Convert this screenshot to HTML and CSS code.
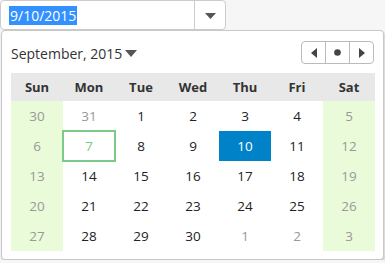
FILE: index.html
```html
<!DOCTYPE html>
<html lang="en">
<head>
  <meta charset="utf-8">
  <link rel="stylesheet" href="styles.css">
</head>
<body>

<div class="picker">
  <div class="input-box">
    <div class="input-text"><span class="sel">9/10/2015</span></div>
    <div class="drop-btn">
      <svg width="11" height="6" viewBox="0 0 11 6"><path d="M0 0 L11 0 L5.5 6 Z" fill="#555"/></svg>
    </div>
  </div>

  <div class="popup">
    <div class="cal-head">
      <div class="month">September, 2015
        <svg width="12" height="7" viewBox="0 0 12 7"><path d="M0 0 L12 0 L6 7 Z" fill="#555"/></svg>
      </div>
      <div class="nav">
        <div class="nav-btn">
          <svg width="6" height="10" viewBox="0 0 6 10"><path d="M6 0 L6 10 L0 5 Z" fill="#444"/></svg>
        </div>
        <div class="nav-btn">
          <svg width="7" height="7" viewBox="0 0 7 7"><circle cx="3.5" cy="3.5" r="3.3" fill="#444"/></svg>
        </div>
        <div class="nav-btn">
          <svg width="6" height="10" viewBox="0 0 6 10"><path d="M0 0 L0 10 L6 5 Z" fill="#444"/></svg>
        </div>
      </div>
    </div>

    <table class="cal">
      <tr class="days">
        <th>Sun</th><th>Mon</th><th>Tue</th><th>Wed</th><th>Thu</th><th>Fri</th><th>Sat</th>
      </tr>
      <tr>
        <td class="wknd">30</td><td class="other">31</td><td>1</td><td>2</td><td>3</td><td>4</td><td class="wknd">5</td>
      </tr>
      <tr>
        <td class="wknd">6</td><td class="today">7</td><td>8</td><td>9</td><td class="picked">10</td><td>11</td><td class="wknd">12</td>
      </tr>
      <tr>
        <td class="wknd">13</td><td>14</td><td>15</td><td>16</td><td>17</td><td>18</td><td class="wknd">19</td>
      </tr>
      <tr>
        <td class="wknd">20</td><td>21</td><td>22</td><td>23</td><td>24</td><td>25</td><td class="wknd">26</td>
      </tr>
      <tr>
        <td class="wknd">27</td><td>28</td><td>29</td><td>30</td><td class="other">1</td><td class="other">2</td><td class="wknd">3</td>
      </tr>
    </table>
  </div>
</div>

</body>
</html>
```

FILE: styles.css
```css
body {
  margin: 0;
  background-color: #f6f6f6;
  font-family: "Open Sans", "Noto Sans", sans-serif;
  color: #333;
  }

.picker {
  width: 384px;
  }

.input-box {
  width: 224px;
  height: 28px;
  display: flex;
  border: 1px solid #ccc;
  border-radius: 4px;
  background-color: #fff;
  }

.input-text {
  flex: 1;
  display: flex;
  align-items: center;
  padding-left: 8px;
  font-size: 14px;
  }

.sel {
  background-color: #3390ff;
  color: #fff;
  line-height: 19px;
  padding: 0 1px;
  }

.drop-btn {
  width: 30px;
  border-left: 1px solid #ccc;
  display: flex;
  justify-content: center;
  align-items: center;
  padding-top: 2px;
  }

.popup {
  margin-left: 1px;
  width: 364px;
  padding: 10px 8px 8px 9px;
  border: 1px solid #c8c8c8;
  border-radius: 4px;
  background-color: #fff;
  box-shadow: 1px 2px 3px rgba(0,0,0,0.18);
  }

.cal-head {
  display: flex;
  justify-content: space-between;
  align-items: center;
  height: 23px;
  margin-bottom: 9px;
  }

.month {
  font-size: 14px;
  display: flex;
  align-items: center;
  gap: 3px;
  padding-top: 1px;
  }

.nav {
  display: flex;
  height: 21px;
  border: 1px solid #bbb;
  border-radius: 4px;
  margin-right: 1px;
  }

.nav-btn {
  width: 23px;
  display: flex;
  justify-content: center;
  align-items: center;
  }

.nav-btn + .nav-btn {
  border-left: 1px solid #bbb;
  }

.cal {
  border-collapse: collapse;
  table-layout: fixed;
  width: 364px;
  }

.cal th {
  height: 28px;
  padding: 0;
  background-color: #e8e8e8;
  font-size: 13px;
  font-weight: bold;
  color: #333;
  }

.cal td {
  height: 30px;
  padding: 0;
  text-align: center;
  font-size: 13.5px;
  color: #222;
  }

.cal td.wknd {
  background-color: #eafbd9;
  color: #999;
  }

.cal td.other {
  color: #999;
  }

.cal td.today {
  color: #7cc98a;
  outline: 2px solid #7cc98a;
  outline-offset: -1px;
  }

.cal td.picked {
  background-color: #0082c8;
  color: #fff;
  }
```
